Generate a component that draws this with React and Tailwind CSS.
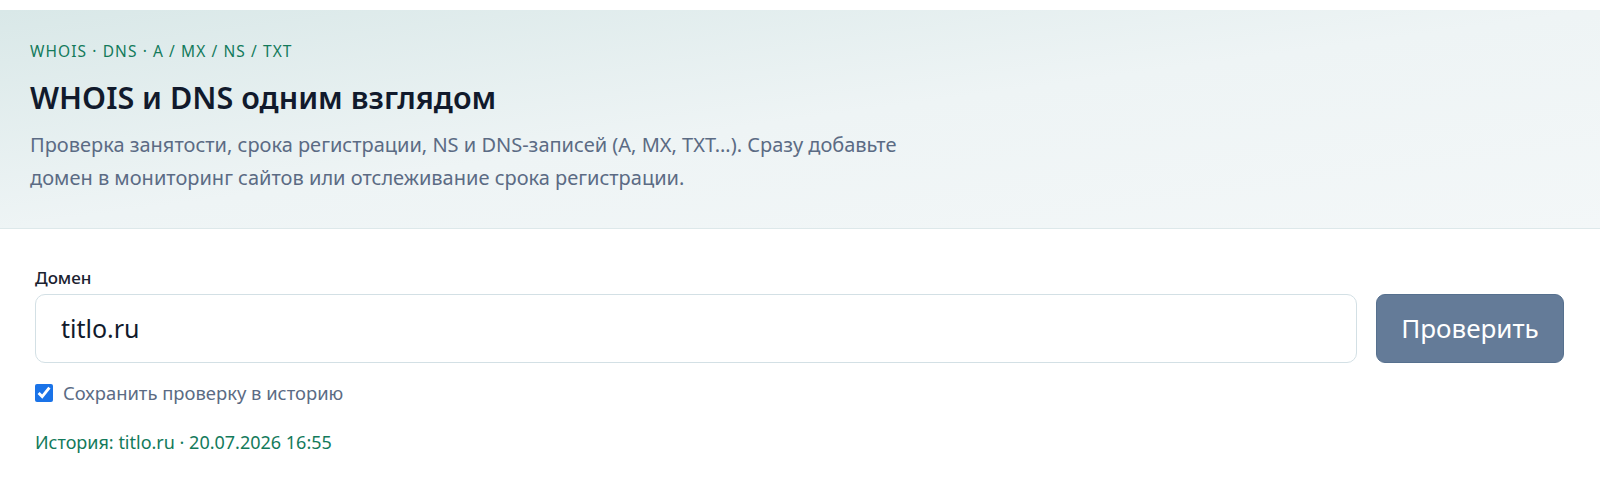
import React, { useState } from 'react';

const App = () => {
  const [domain, setDomain] = useState('titlo.ru');
  const [saveHistory, setSaveHistory] = useState(true);

  return (
    <div className="min-h-screen bg-white pt-[10px] font-['Noto_Sans',sans-serif]">
      {/* Hero */}
      <div className="border-b border-[#dde8ea] bg-gradient-to-br from-[#d9e8e8] via-[#eef4f5] to-[#f3f7f8] px-[30px] pt-[31px] pb-[34px]">
        <div className="text-[15.5px] leading-[20px] tracking-[0.07em] text-[#137a5b]">
          WHOIS · DNS · A / MX / NS / TXT
        </div>
        <h1 className="mt-[17px] text-[30.5px] font-semibold leading-[38px] text-[#111a2c]">
          WHOIS и DNS одним взглядом
        </h1>
        <p className="mt-[12px] max-w-[900px] text-[20px] leading-[33px] text-[#5b6b84]">
          Проверка занятости, срока регистрации, NS и DNS-записей (A, MX, TXT…). Сразу добавьте
          домен в мониторинг сайтов или отслеживание срока регистрации.
        </p>
      </div>

      {/* Form */}
      <form className="pl-[35px] pr-[36px] pt-[37px]" onSubmit={(e) => e.preventDefault()}>
        <label htmlFor="domain" className="block text-[17px] font-medium leading-[24px] text-[#1b2230]">
          Домен
        </label>
        <div className="mt-[4px] flex gap-[19px]">
          <div className="flex h-[69px] flex-1 items-center rounded-[10px] border border-[#d3e0e5] bg-white px-[25px]">
            <input
              id="domain"
              type="text"
              value={domain}
              onChange={(e) => setDomain(e.target.value)}
              className="w-full bg-transparent text-[25px] text-[#111a2c] outline-none"
            />
          </div>
          <button
            type="submit"
            className="h-[69px] w-[188px] rounded-[9px] border border-[#56708e] bg-[#647b98] text-[26px] text-white"
          >
            Проверить
          </button>
        </div>
        <label className="mt-[18px] flex items-center gap-[10px] text-[18.4px] leading-[24px] text-[#5b6b84]">
          <input
            type="checkbox"
            checked={saveHistory}
            onChange={(e) => setSaveHistory(e.target.checked)}
            className="h-[18px] w-[18px] accent-[#1a73e8]"
          />
          Сохранить проверку в историю
        </label>
        <div className="mt-[25px] text-[18px] leading-[24px] text-[#137a5b]">
          История: titlo.ru · 20.07.2026 16:55
        </div>
      </form>
    </div>
  );
};

export default App;
